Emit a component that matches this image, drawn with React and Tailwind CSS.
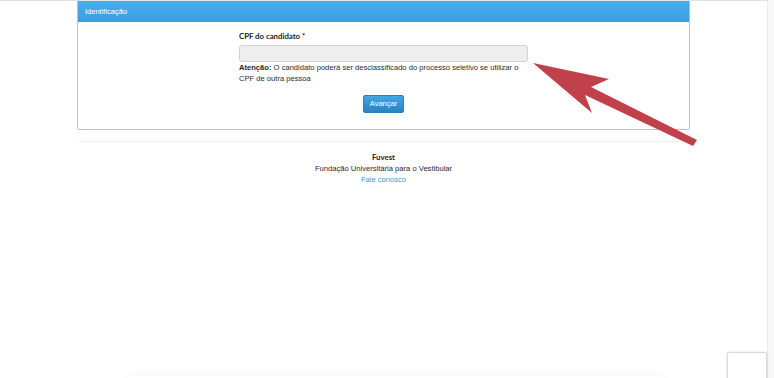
export default function App() {
  return (
    <div className="relative flex h-[378px] w-[774px] overflow-hidden bg-white font-['Liberation_Sans',Arial,sans-serif] text-[7.6px] text-[#2a2a2a]">
      <div className="flex-1 border-t border-[#e2e2e2]">
        <div className="mx-auto w-[613px]">
          <div className="rounded-b-[2px] border-x border-b border-solid border-x-[#8ed0f4] border-b-[#8ed0f4]">
            <div className="flex h-[21px] items-center bg-gradient-to-b from-[#47adec] to-[#3a9de0] px-[7px] text-[7.5px] text-white">
              Identificação
            </div>
            <div className="px-4 pb-[16px] pt-[8px]">
              <div className="mx-auto w-[289px]">
                <label className="mb-[3px] block font-['Lato',sans-serif] text-[7.8px] font-bold leading-[12px] text-[#222]">
                  CPF do candidato *
                </label>
                <input
                  disabled
                  className="block h-[17px] w-full rounded-[3px] border border-[#d2d2d2] bg-[#eeeeee]"
                />
                <p className="leading-[11px]">
                  <b>Atenção:</b> O candidato poderá ser desclassificado do processo seletivo se utilizar o CPF de outra pessoa
                </p>
                <div className="mt-[11px] flex justify-center">
                  <button className="h-[18px] w-[41px] rounded-[2px] border border-[#2b7fbd] bg-gradient-to-b from-[#44a6e3] to-[#2a83c6] text-[7.5px] text-white">
                    Avançar
                  </button>
                </div>
              </div>
            </div>
          </div>
          <div className="mt-[11px] h-px bg-[#f1f1f1]" />
          <div className="mt-[10px] flex flex-col items-center leading-[11px]">
            <div className="font-['Lato',sans-serif] text-[7.8px] font-bold text-[#222]">Fuvest</div>
            <div>Fundação Universitária para o Vestibular</div>
            <a className="text-[#2a9fd6]">Fale conosco</a>
          </div>
        </div>
      </div>
      <div className="w-[7px] border-l border-[#ececec] bg-[#f8f8f8]" />

      <svg className="pointer-events-none absolute left-0 top-0" width="774" height="378">
        <polygon
          points="533,63 609,79 591,87 697,140 693,146 585,95 592,113"
          fill="#c0414a"
        />
      </svg>

      <div className="absolute left-[727px] top-[352px] h-[40px] w-[40px] rounded-[2px] border border-[#d8d8d8] bg-white shadow-[0_0_3px_rgba(0,0,0,0.12)]" />
      <div className="absolute bottom-[-6px] left-[128px] h-[8px] w-[535px] bg-white shadow-[0_0_8px_rgba(0,0,0,0.06)]" />
    </div>
  );
}
